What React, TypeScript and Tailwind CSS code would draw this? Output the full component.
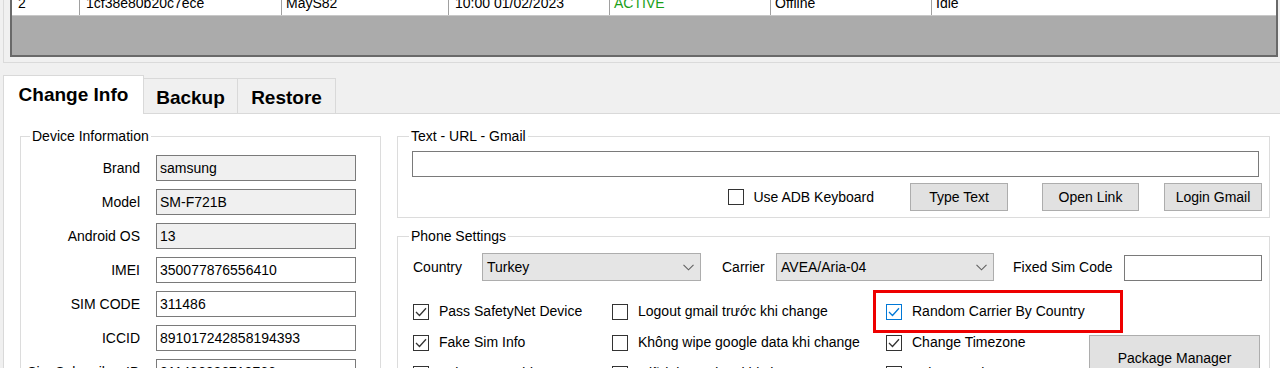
import React from "react";

function Check({ color }: { color: string }) {
  return (
    <svg width="12" height="10" viewBox="0 0 12 10">
      <polyline points="1,5 4.5,8.5 11,1.2" fill="none" stroke={color} strokeWidth="1.3" />
    </svg>
  );
}

function CheckBox({ checked, hover, label }: { checked?: boolean; hover?: boolean; label: string }) {
  return (
    <div className="flex items-center">
      <div
        className={
          hover
            ? "w-[16px] h-[16px] shrink-0 border border-[#0078d7] bg-white flex items-center justify-center"
            : "w-[16px] h-[16px] shrink-0 border border-[#333333] bg-white flex items-center justify-center"
        }
      >
        {checked && <Check color={hover ? "#0078d7" : "#333333"} />}
      </div>
      <span className="ml-[10px] leading-[17px] whitespace-nowrap">{label}</span>
    </div>
  );
}

function Chevron() {
  return (
    <svg width="11" height="7" viewBox="0 0 11 7">
      <polyline points="0.5,0.8 5.5,5.8 10.5,0.8" fill="none" stroke="#606060" strokeWidth="1.1" />
    </svg>
  );
}

function Combo({ value, width }: { value: string; width: string }) {
  return (
    <div className={`${width} h-[28px] flex items-center justify-between bg-[#e5e5e5] border border-[#adadad] pl-[4px] pr-[6px]`}>
      <span className="leading-[17px]">{value}</span>
      <Chevron />
    </div>
  );
}

function Btn({ label, cls }: { label: string; cls: string }) {
  return (
    <div className={`${cls} h-[28px] flex items-center justify-center bg-[#e1e1e1] border border-[#adadad] leading-[17px]`}>
      {label}
    </div>
  );
}

const deviceRows: { label: string; value: string; ro: boolean }[] = [
  { label: "Brand", value: "samsung", ro: true },
  { label: "Model", value: "SM-F721B", ro: true },
  { label: "Android OS", value: "13", ro: true },
  { label: "IMEI", value: "350077876556410", ro: false },
  { label: "SIM CODE", value: "311486", ro: false },
  { label: "ICCID", value: "891017242858194393", ro: false },
  { label: "Sim Subscriber ID", value: "311486286713766", ro: false },
];

export default function App() {
  return (
    <div className="w-[1280px] h-[368px] overflow-hidden bg-[#f0f0f0] flex flex-col text-[14px] text-black font-['Liberation_Sans',Arial,sans-serif] relative">
      {/* Top panel with grid */}
      <div className="ml-[3px] border-l border-b border-[#dadada] pl-[6px] pr-[2px] pb-[5px] shrink-0">
        <div className="h-[57px] flex flex-col bg-[#ababab] border-l-2 border-r-2 border-b-2 border-[#696969]">
          <div className="mt-[-8px] h-[24px] shrink-0 flex bg-white border-b border-[#c8c8c8]">
            <div className="w-[68px] border-r border-[#a0a0a0] pl-[6px] pt-[3px] leading-[16px]">2</div>
            <div className="w-[202px] border-r border-[#a0a0a0] pl-[6px] pt-[3px] leading-[16px]">1cf38e80b20c7ece</div>
            <div className="w-[167px] border-r border-[#a0a0a0] pl-[4px] pt-[3px] leading-[16px]">MayS82</div>
            <div className="w-[161px] border-r border-[#a0a0a0] pl-[6px] pt-[3px] leading-[16px]">10:00 01/02/2023</div>
            <div className="w-[161px] border-r border-[#a0a0a0] pl-[4px] pt-[3px] leading-[16px] text-[#19a019]">ACTIVE</div>
            <div className="w-[161px] border-r border-[#a0a0a0] pl-[4px] pt-[3px] leading-[16px]">Offline</div>
            <div className="flex-1 pl-[4px] pt-[3px] leading-[16px]">Idle</div>
          </div>
        </div>
      </div>

      {/* Tabs */}
      <div className="mt-[12px] ml-[3px] flex items-end shrink-0 relative z-10">
        <div className="w-[141px] h-[39px] mb-[-1px] bg-white border-t border-l border-r border-[#d9d9d9] flex items-center justify-center font-bold text-[19px] leading-[22px]">
          Change Info
        </div>
        <div className="w-[94px] h-[35px] bg-[#f0f0f0] border-t border-r border-[#d9d9d9] flex items-center justify-center pt-[3px] font-bold text-[19px] leading-[22px]">
          Backup
        </div>
        <div className="w-[98px] h-[35px] bg-[#f0f0f0] border-t border-r border-[#d9d9d9] flex items-center justify-center pt-[3px] font-bold text-[19px] leading-[22px]">
          Restore
        </div>
      </div>

      {/* Tab page */}
      <div className="flex-1 ml-[3px] bg-white border-l border-t border-[#d9d9d9] pt-[14px] pl-[16px] flex gap-[16px] items-start">
        {/* Device Information */}
        <fieldset className="w-[361px] border border-[#dcdcdc] pt-[10px] pb-[10px] shrink-0">
          <legend className="ml-[9px] px-[2px] leading-[17px]">Device Information</legend>
          <div className="grid grid-cols-[119px_200px] gap-x-[16px] gap-y-[8px]">
            {deviceRows.map((r) => (
              <React.Fragment key={r.label}>
                <div className="h-[26px] flex items-center justify-end leading-[17px] whitespace-nowrap">{r.label}</div>
                <div
                  className={
                    r.ro
                      ? "h-[26px] flex items-center bg-[#f0f0f0] border border-[#7a7a7a] pl-[3px] leading-[17px]"
                      : "h-[26px] flex items-center bg-white border border-[#7a7a7a] pl-[3px] leading-[17px]"
                  }
                >
                  {r.value}
                </div>
              </React.Fragment>
            ))}
          </div>
        </fieldset>

        {/* Right column */}
        <div className="w-[873px] flex flex-col shrink-0">
          <fieldset className="border border-[#dcdcdc] pt-[6px] pb-[6px] pl-[14px] pr-[7px]">
            <legend className="ml-[-3px] px-[2px] leading-[17px]">Text - URL - Gmail</legend>
            <div className="h-[26px] mr-[3px] bg-white border border-[#7a7a7a]"></div>
            <div className="mt-[6px] h-[28px] flex items-center justify-end">
              <div className="flex items-center">
                <div className="w-[16px] h-[16px] border border-[#333333] bg-white"></div>
                <span className="ml-[9px] leading-[17px]">Use ADB Keyboard</span>
              </div>
              <Btn label="Type Text" cls="ml-[36px] w-[98px]" />
              <Btn label="Open Link" cls="ml-[34px] w-[97px]" />
              <Btn label="Login Gmail" cls="ml-[25px] w-[98px]" />
            </div>
          </fieldset>

          <fieldset className="mt-[10px] border border-[#dcdcdc] pt-[8px] pl-[15px] pr-[7px] pb-[20px]">
            <legend className="ml-[-4px] px-[2px] leading-[17px]">Phone Settings</legend>
            <div className="h-[28px] flex items-center">
              <div className="w-[69px] leading-[17px]">Country</div>
              <Combo value="Turkey" width="w-[219px]" />
              <div className="ml-[21px] w-[54px] leading-[17px]">Carrier</div>
              <Combo value="AVEA/Aria-04" width="w-[218px]" />
              <div className="ml-[19px] w-[111px] leading-[17px] whitespace-nowrap">Fixed Sim Code</div>
              <div className="w-[138px] h-[26px] mt-[2px] bg-white border border-[#7a7a7a]"></div>
            </div>
            <div className="mt-[15px] grid grid-cols-[199px_274px_203px_171px] grid-rows-[31px_31px_31px]">
              <div className="flex items-center"><CheckBox checked label="Pass SafetyNet Device" /></div>
              <div className="flex items-center"><CheckBox label="Logout gmail trước khi change" /></div>
              <div className="flex items-center"><CheckBox checked hover label="Random Carrier By Country" /></div>
              <div></div>
              <div className="flex items-center"><CheckBox checked label="Fake Sim Info" /></div>
              <div className="flex items-center"><CheckBox label="Không wipe google data khi change" /></div>
              <div className="flex items-center"><CheckBox checked label="Change Timezone" /></div>
              <div className="row-span-2 pt-[8px]">
                <div className="h-[46px] flex items-center justify-center bg-[#e1e1e1] border border-[#adadad] leading-[17px]">
                  Package Manager
                </div>
              </div>
              <div className="flex items-center"><CheckBox label="Fake MAC Address" /></div>
              <div className="flex items-center"><CheckBox label="Giữ lại app data khi change" /></div>
              <div className="flex items-center"><CheckBox label="Fake Location" /></div>
            </div>
          </fieldset>
        </div>
      </div>

      {/* Red annotation box */}
      <div className="absolute left-[873px] top-[290px] w-[250px] h-[43px] border-[3px] border-[#ee0000] pointer-events-none"></div>
    </div>
  );
}
